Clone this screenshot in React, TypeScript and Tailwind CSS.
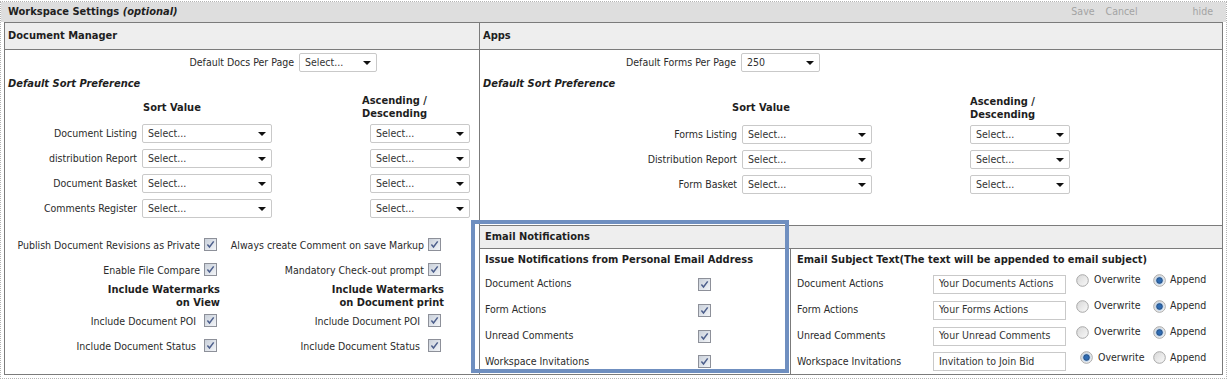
import React from "react";

function Caret() {
  return (
    <span className="ml-auto mr-[5px] h-0 w-0 border-x-[4px] border-t-[4px] border-x-transparent border-t-[#111]" />
  );
}

function FakeSelect({ value = "Select...", className }: { value?: string; className: string }) {
  return (
    <div
      className={`flex h-[19px] items-center rounded-[2px] border border-[#c9c9c9] bg-white pl-[5px] text-[#333] ${className}`}
    >
      <span>{value}</span>
      <Caret />
    </div>
  );
}

function Check() {
  return (
    <span className="inline-flex h-[13px] w-[13px] shrink-0 items-center justify-center border border-[#8d9099] bg-linear-to-br from-[#c9d0da] to-[#f3f5f8]">
      <svg width="9" height="9" viewBox="0 0 9 9">
        <path d="M1.4 4.6 L3.5 7 L7.7 1.4" fill="none" stroke="#4d5f8c" strokeWidth="1.5" />
      </svg>
    </span>
  );
}

function Radio({ on }: { on?: boolean }) {
  return (
    <svg width="13" height="13" viewBox="0 0 13 13" className="shrink-0">
      <defs>
        <linearGradient id="rg" x1="0" y1="0" x2="1" y2="1">
          <stop offset="0" stopColor="#d6d6d6" />
          <stop offset="1" stopColor="#fafafa" />
        </linearGradient>
      </defs>
      <circle cx="6.5" cy="6.5" r="5.8" fill="url(#rg)" stroke="#a8a8a8" strokeWidth="1" />
      {on && (
        <>
          <circle cx="6.5" cy="6.5" r="4.2" fill="#b9d3ee" />
          <circle cx="6.5" cy="6.5" r="2.9" fill="#2f6cb3" stroke="#1c3d6a" strokeWidth="0.7" />
        </>
      )}
    </svg>
  );
}

const sortDocs = ["Document Listing", "distribution Report", "Document Basket", "Comments Register"];
const sortApps = ["Forms Listing", "Distribution Report", "Form Basket"];

const notify = [
  { label: "Document Actions", text: "Your Documents Actions", over: false },
  { label: "Form Actions", text: "Your Forms Actions", over: false },
  { label: "Unread Comments", text: "Your Unread Comments", over: false },
  { label: "Workspace Invitations", text: "Invitation to Join Bid", over: true },
];

export default function App() {
  return (
    <div className="relative h-[380px] w-[1227px] bg-white font-['DejaVu_Sans_Condensed','Liberation_Sans',sans-serif] text-[10.5px] text-[#2b2b2b]">
      <div className="mt-px h-[378px] border border-dotted border-[#b3b3b3]">
        {/* title bar */}
        <div className="flex h-[20px] items-center bg-[#dedede] pl-[7px] pr-[13px]">
          <span className="text-[11px] font-bold text-[#1e1e1e]">
            Workspace Settings <i>(optional)</i>
          </span>
          <span className="ml-auto text-[#a3a3a3]">Save</span>
          <span className="ml-[11px] text-[#a3a3a3]">Cancel</span>
          <span className="ml-[55px] text-[#a3a3a3]">hide</span>
        </div>

        <div className="mx-[3px] grid grid-cols-[475px_1fr] border border-[#7b7b7b]">
          {/* Document Manager */}
          <div className="flex flex-col border-r border-[#7b7b7b]">
            <div className="flex h-[27px] items-center border-b border-[#7b7b7b] bg-[#eeeeee] pl-[3px] text-[11px] font-bold text-[#1e1e1e]">
              Document Manager
            </div>
            <div className="flex h-[25px] items-center">
              <span className="w-[289px] text-right">Default Docs Per Page</span>
              <FakeSelect className="ml-[5px] w-[78px]" />
            </div>
            <div className="flex h-[18px] items-center pl-[3px] text-[11px] font-bold italic text-[#1e1e1e]">
              Default Sort Preference
            </div>
            <div className="flex h-[28px] items-center text-[11px] font-bold leading-[13px] text-[#1e1e1e]">
              <span className="ml-[138px] w-[219px]">Sort Value</span>
              <span>
                Ascending /<br />
                Descending
              </span>
            </div>
            {sortDocs.map((l) => (
              <div key={l} className="flex h-[25px] items-center">
                <span className="w-[132px] text-right">{l}</span>
                <FakeSelect className="ml-[5px] w-[130px]" />
                <FakeSelect className="ml-[98px] w-[100px]" />
              </div>
            ))}
            <div className="h-[12px]" />
            <div className="flex h-[25px] items-center">
              <span className="w-[195px] text-right">Publish Document Revisions as Private</span>
              <span className="ml-[4px]"><Check /></span>
              <span className="w-[207px] text-right">Always create Comment on save Markup</span>
              <span className="ml-[4px]"><Check /></span>
            </div>
            <div className="flex h-[25px] items-center">
              <span className="w-[195px] text-right">Enable File Compare</span>
              <span className="ml-[4px]"><Check /></span>
              <span className="w-[207px] text-right">Mandatory Check-out prompt</span>
              <span className="ml-[4px]"><Check /></span>
            </div>
            <div className="flex h-[26px] items-center text-[11px] font-bold leading-[13px] text-[#1e1e1e]">
              <span className="w-[215px] text-right">
                Include Watermarks
                <br />
                on View
              </span>
              <span className="w-[224px] text-right">
                Include Watermarks
                <br />
                on Document print
              </span>
            </div>
            {["Include Document POI", "Include Document Status"].map((l) => (
              <div key={l} className="flex h-[25px] items-center">
                <span className="w-[191px] text-right">{l}</span>
                <span className="ml-[8px]"><Check /></span>
                <span className="w-[203px] text-right">{l}</span>
                <span className="ml-[8px]"><Check /></span>
              </div>
            ))}
          </div>

          {/* Apps */}
          <div className="flex flex-col">
            <div className="flex h-[27px] items-center border-b border-[#7b7b7b] bg-[#eeeeee] pl-[3px] text-[11px] font-bold text-[#1e1e1e]">
              Apps
            </div>
            <div className="flex h-[25px] items-center">
              <span className="w-[256px] text-right">Default Forms Per Page</span>
              <FakeSelect value="250" className="ml-[5px] w-[79px]" />
            </div>
            <div className="flex h-[18px] items-center pl-[3px] text-[11px] font-bold italic text-[#1e1e1e]">
              Default Sort Preference
            </div>
            <div className="flex h-[29px] items-center text-[11px] font-bold leading-[13px] text-[#1e1e1e]">
              <span className="ml-[252px] w-[238px]">Sort Value</span>
              <span>
                Ascending /<br />
                Descending
              </span>
            </div>
            {sortApps.map((l) => (
              <div key={l} className="flex h-[25px] items-center">
                <span className="w-[257px] text-right">{l}</span>
                <FakeSelect className="ml-[5px] w-[130px]" />
                <FakeSelect className="ml-[98px] w-[100px]" />
              </div>
            ))}
            <div className="h-[28px]" />

            {/* Email Notifications */}
            <div className="border-t border-[#7b7b7b]">
              <div className="flex h-[23px] items-center border-b border-[#7b7b7b] bg-[#eeeeee] pl-[5px] text-[11px] font-bold text-[#1e1e1e]">
                Email Notifications
              </div>
              <div className="grid grid-cols-[311px_1fr]">
                <div className="flex flex-col border-r border-[#7b7b7b]">
                  <div className="flex h-[22px] items-center pl-[5px] text-[11px] font-bold text-[#1e1e1e]">
                    Issue Notifications from Personal Email Address
                  </div>
                  {notify.map((n, i) => (
                    <div key={n.label} className={`flex items-center ${i === 3 ? "h-[25px]" : "h-[26px]"}`}>
                      <span className="w-[218px] pl-[5px]">{n.label}</span>
                      <Check />
                    </div>
                  ))}
                </div>
                <div className="flex flex-col">
                  <div className="flex h-[22px] items-center pl-[6px] text-[11px] font-bold text-[#1e1e1e]">
                    Email Subject Text(The text will be appended to email subject)
                  </div>
                  {notify.map((n, i) => (
                    <div key={n.label} className={`flex items-center ${i === 3 ? "h-[25px]" : "h-[26px]"}`}>
                      <span className="w-[142px] pl-[6px]">{n.label}</span>
                      <div className="flex h-[19px] w-[133px] items-center border border-[#c9c9c9] pl-[5px] text-[#333]">
                        {n.text}
                      </div>
                      <div className={`mb-[8px] flex items-center ${n.over ? "ml-[14px]" : "ml-[10px]"}`}>
                        <Radio on={n.over} />
                        <span className={`ml-[5px] ${n.over ? "w-[47px]" : "w-[51px]"}`}>Overwrite</span>
                        <span className="ml-[8px]"><Radio on={!n.over} /></span>
                        <span className="ml-[4px]">Append</span>
                      </div>
                    </div>
                  ))}
                </div>
              </div>
            </div>
          </div>
        </div>
      </div>

      {/* highlight box drawn over the email notifications block */}
      <div className="pointer-events-none absolute left-[471px] top-[219px] h-[153px] w-[318px] border-4 border-[#6f8fc0]" />
    </div>
  );
}
